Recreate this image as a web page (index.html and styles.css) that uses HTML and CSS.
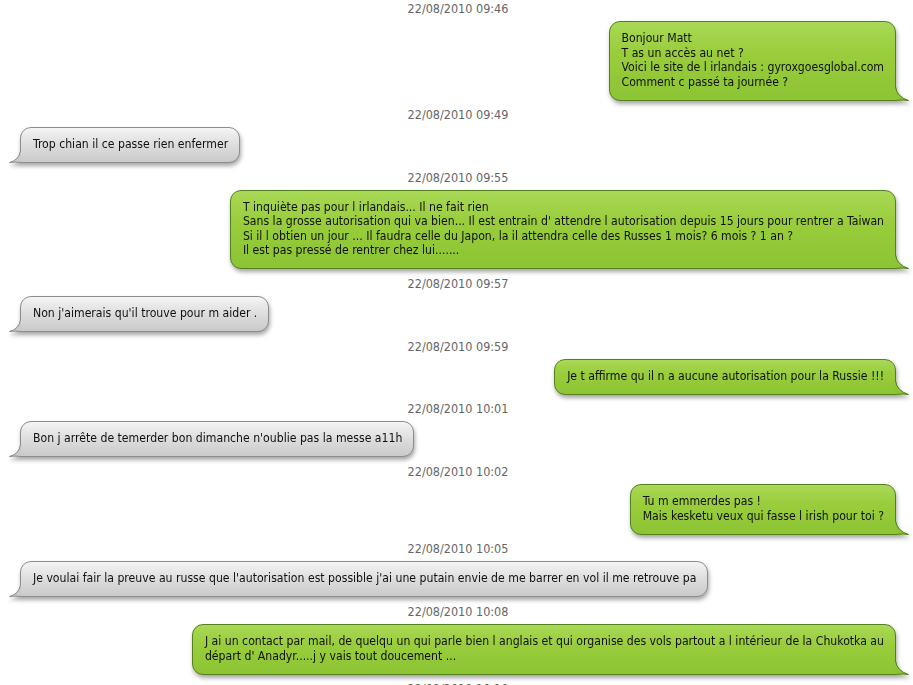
FILE: index.html
```html
<!DOCTYPE html>
<html lang="fr">
<head>
    <meta charset="UTF-8">
    <title>Conversation SMS</title>
    <link rel="stylesheet" href="styles.css">
</head>
<body>
    <div class="thread">
        <div class="stamp">22/08/2010 09:46</div>
        <div class="msg msg-out">
            <div class="bubble">Bonjour Matt<br>T as un accès au net ?<br>Voici le site de l irlandais : gyroxgoesglobal.com<br>Comment c passé ta journée ?
                <svg class="tail" width="14" height="14" viewBox="0 0 14 14"><path class="tail-fill" d="M0,0 L1,0 Q2.5,10 13.5,13.5 L0,13.5 Z"/><path class="tail-line" d="M0.5,0 Q2,10 13.5,13.5 Q8,12.2 0,13.5"/></svg>
            </div>
        </div>

        <div class="stamp">22/08/2010 09:49</div>
        <div class="msg msg-in">
            <div class="bubble">Trop chian il ce passe rien enfermer
                <svg class="tail" width="12" height="12" viewBox="0 0 12 12"><path class="tail-fill" d="M12,0 L11,0 Q9.5,9 0.5,11.5 L12,11.5 Z"/><path class="tail-line" d="M11.5,0 Q10,9 0.5,11.5 Q5,10.5 12,11.5"/></svg>
            </div>
        </div>

        <div class="stamp">22/08/2010 09:55</div>
        <div class="msg msg-out">
            <div class="bubble">T inquiète pas pour l irlandais... Il ne fait rien<br>Sans la grosse autorisation qui va bien... Il est entrain d' attendre l autorisation depuis 15 jours pour rentrer a Taiwan<br>Si il l obtien un jour ... Il faudra celle du Japon, la il attendra celle des Russes 1 mois? 6 mois ? 1 an ?<br>Il est pas pressé de rentrer chez lui.......
                <svg class="tail" width="14" height="14" viewBox="0 0 14 14"><path class="tail-fill" d="M0,0 L1,0 Q2.5,10 13.5,13.5 L0,13.5 Z"/><path class="tail-line" d="M0.5,0 Q2,10 13.5,13.5 Q8,12.2 0,13.5"/></svg>
            </div>
        </div>

        <div class="stamp">22/08/2010 09:57</div>
        <div class="msg msg-in">
            <div class="bubble">Non j'aimerais qu'il trouve pour m aider .
                <svg class="tail" width="12" height="12" viewBox="0 0 12 12"><path class="tail-fill" d="M12,0 L11,0 Q9.5,9 0.5,11.5 L12,11.5 Z"/><path class="tail-line" d="M11.5,0 Q10,9 0.5,11.5 Q5,10.5 12,11.5"/></svg>
            </div>
        </div>

        <div class="stamp">22/08/2010 09:59</div>
        <div class="msg msg-out">
            <div class="bubble">Je t affirme qu il n a aucune autorisation pour la Russie !!!
                <svg class="tail" width="14" height="14" viewBox="0 0 14 14"><path class="tail-fill" d="M0,0 L1,0 Q2.5,10 13.5,13.5 L0,13.5 Z"/><path class="tail-line" d="M0.5,0 Q2,10 13.5,13.5 Q8,12.2 0,13.5"/></svg>
            </div>
        </div>

        <div class="stamp">22/08/2010 10:01</div>
        <div class="msg msg-in">
            <div class="bubble">Bon j arrête de temerder bon dimanche n'oublie pas la messe a11h
                <svg class="tail" width="12" height="12" viewBox="0 0 12 12"><path class="tail-fill" d="M12,0 L11,0 Q9.5,9 0.5,11.5 L12,11.5 Z"/><path class="tail-line" d="M11.5,0 Q10,9 0.5,11.5 Q5,10.5 12,11.5"/></svg>
            </div>
        </div>

        <div class="stamp">22/08/2010 10:02</div>
        <div class="msg msg-out">
            <div class="bubble">Tu m emmerdes pas !<br>Mais kesketu veux qui fasse l irish pour toi ?
                <svg class="tail" width="14" height="14" viewBox="0 0 14 14"><path class="tail-fill" d="M0,0 L1,0 Q2.5,10 13.5,13.5 L0,13.5 Z"/><path class="tail-line" d="M0.5,0 Q2,10 13.5,13.5 Q8,12.2 0,13.5"/></svg>
            </div>
        </div>

        <div class="stamp">22/08/2010 10:05</div>
        <div class="msg msg-in">
            <div class="bubble">Je voulai fair la preuve au russe que l'autorisation est possible j'ai une putain envie de me barrer en vol il me retrouve pa
                <svg class="tail" width="12" height="12" viewBox="0 0 12 12"><path class="tail-fill" d="M12,0 L11,0 Q9.5,9 0.5,11.5 L12,11.5 Z"/><path class="tail-line" d="M11.5,0 Q10,9 0.5,11.5 Q5,10.5 12,11.5"/></svg>
            </div>
        </div>

        <div class="stamp">22/08/2010 10:08</div>
        <div class="msg msg-out">
            <div class="bubble">J ai un contact par mail, de quelqu un qui parle bien l anglais et qui organise des vols partout a l intérieur de la Chukotka au<br>départ d' Anadyr.....j y vais tout doucement ...
                <svg class="tail" width="14" height="14" viewBox="0 0 14 14"><path class="tail-fill" d="M0,0 L1,0 Q2.5,10 13.5,13.5 L0,13.5 Z"/><path class="tail-line" d="M0.5,0 Q2,10 13.5,13.5 Q8,12.2 0,13.5"/></svg>
            </div>
        </div>

        <div class="stamp">22/08/2010 10:10</div>
    </div>
</body>
</html>
```

FILE: styles.css
```css
/* Reset */
* {
    margin: 0;
    padding: 0;
    box-sizing: border-box;
}

body {
    font-family: "DejaVu Sans Condensed", "Liberation Sans", sans-serif;
    font-size: 12.15px;
    background-color: #fff;
    color: #111;
}

/* Fil de la conversation */
.thread {
    display: flex;
    flex-direction: column;
    padding: 2px 17px 0 20px;
}

.stamp {
    text-align: center;
    color: #666;
    font-size: 12.5px;
    line-height: 14px;
    margin-bottom: 5px;
}

.msg {
    display: flex;
    margin-bottom: 7.7px;
}

.msg-out {
    justify-content: flex-end;
}

.msg-in {
    justify-content: flex-start;
}

/* Bulles */
.bubble {
    position: relative;
    line-height: 14.5px;
    padding: 9px 11px 10.5px 12px;
    border: 1px solid;
    border-radius: 11px;
    white-space: nowrap;
    filter: drop-shadow(1px 3px 2px rgba(0, 0, 0, 0.35));
}

.msg-out .bubble {
    background: linear-gradient(#a9d956 0%, #99cd3c 40%, #8cc433 100%);
    border-color: #55801f;
    border-bottom-right-radius: 0;
}

.msg-in .bubble {
    background: linear-gradient(#f5f5f5 0%, #dfdfdf 45%, #cacaca 100%);
    border-color: #8d8d8d;
    border-bottom-left-radius: 0;
}

.tail {
    position: absolute;
    bottom: -1px;
    overflow: visible;
}

.msg-out .tail {
    right: -14px;
}

.msg-in .tail {
    left: -12px;
}

.msg-out .tail-fill {
    fill: #8cc433;
}

.msg-in .tail-fill {
    fill: #cacaca;
}

.tail-line {
    fill: none;
    stroke-width: 1;
}

.msg-out .tail-line {
    stroke: #55801f;
}

.msg-in .tail-line {
    stroke: #8d8d8d;
}
```
